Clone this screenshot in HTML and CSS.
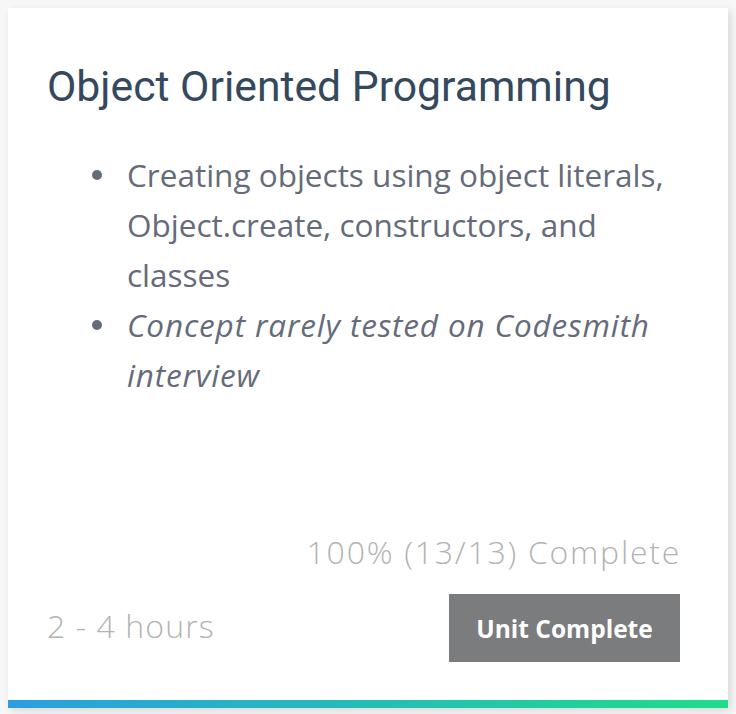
FILE: index.html
```html
<!DOCTYPE html>
<html>
<head>
<meta charset="utf-8">
<link rel="stylesheet" href="styles.css">
</head>
<body>
<div class="card">
  <div class="card-body">
    <h2 class="title">Object Oriented Programming</h2>
    <ul class="topics">
      <li>Creating objects using object literals, Object.create, constructors, and classes</li>
      <li class="note">Concept rarely tested on Codesmith interview</li>
    </ul>
    <div class="spacer"></div>
    <div class="progress">100% (13/13) Complete</div>
    <div class="footer">
      <span class="hours">2 - 4 hours</span>
      <button class="btn">Unit Complete</button>
    </div>
  </div>
  <div class="bar"></div>
</div>
</body>
</html>
```
FILE: styles.css
```css
html, body {
  margin: 0;
  padding: 0;
  background: #f7f7f7;
}
body {
  padding: 8px;
  font-family: "Open Sans", "Noto Sans", sans-serif;
}
.card {
  width: 720px;
  height: 700px;
  background: #fff;
  box-shadow: 3px 3px 8px rgba(0, 0, 0, 0.12);
  display: flex;
  flex-direction: column;
}
.card-body {
  flex: 1;
  display: flex;
  flex-direction: column;
  padding: 0 48px 0 39px;
}
.title {
  margin: 50px 0 0 0;
  font-family: Roboto, sans-serif;
  font-weight: 400;
  font-size: 42.7px;
  line-height: 56px;
  color: #34495e;
}
.topics {
  list-style: none;
  margin: 36px 0 0 0;
  padding-left: 80px;
  font-size: 31.5px;
  line-height: 50px;
  color: #656b7a;
}
.topics li {
  position: relative;
}
.topics li::before {
  content: "";
  position: absolute;
  left: -35px;
  top: 20px;
  width: 10px;
  height: 10px;
  border-radius: 50%;
  background: #656b7a;
}
.note {
  font-style: italic;
  letter-spacing: 0.85px;
}
.spacer { flex: 1; }
.progress {
  text-align: right;
  font-size: 32px;
  font-weight: 300;
  letter-spacing: 1.75px;
  line-height: 40px;
  color: #b3b3b3;
  margin-bottom: 22px;
  margin-right: -1px;
}
.footer {
  display: flex;
  justify-content: space-between;
  align-items: center;
  margin-bottom: 38px;
}
.hours {
  font-size: 32px;
  font-weight: 300;
  letter-spacing: 1.1px;
  color: #b3b3b3;
  position: relative;
  top: -3px;
}
.btn {
  width: 231px;
  height: 68px;
  border: 0;
  background: #7b7c7e;
  color: #fff;
  font-family: inherit;
  font-weight: 700;
  font-size: 24.5px;
}
.bar {
  height: 8px;
  background: linear-gradient(90deg, #2b9ee0, #1edd8a);
}
```
